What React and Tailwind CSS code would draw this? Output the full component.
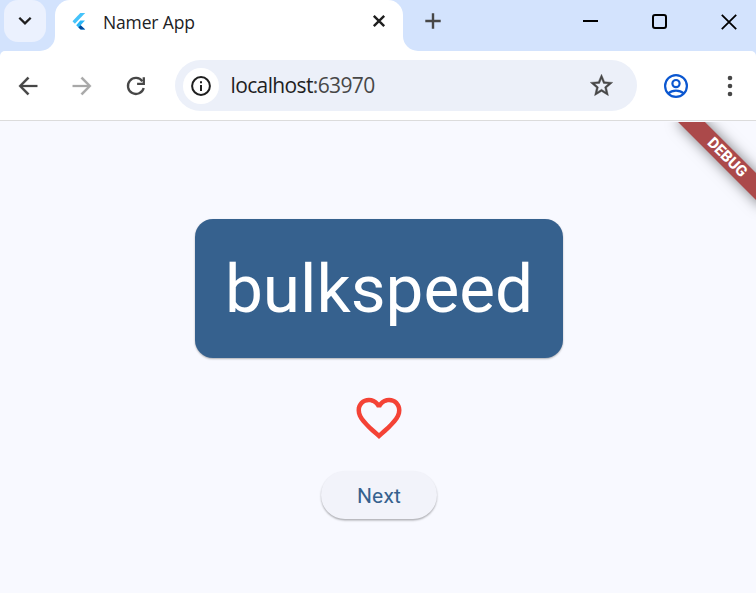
import React from "react";

const Material = ({ size, d, className, weight = 0 }) => (
  <svg width={size} height={size} viewBox="0 0 24 24" className={className} fill="currentColor" stroke="currentColor" strokeWidth={weight}>
    <path d={d} />
  </svg>
);

function FlutterLogo() {
  return (
    <svg width="16" height="19" viewBox="0 0 16 19">
      <path d="M0.5 9.3 8.3 1H13.2L2.9 11.7Z" fill="#45c3fa" />
      <path d="M8.3 8.6H13L8.6 13.2 13.2 17.6H8.6L4.2 13.2Z" fill="#29b6f6" />
      <path d="M6.4 15.4 8.6 13.2 13.2 17.6H8.6Z" fill="#01469b" />
    </svg>
  );
}

function TabStrip() {
  return (
    <header className="flex h-[51px] bg-white">
      <div className="w-[55px] rounded-br-[15px] bg-[#d3e3fd] pl-1">
        <div className="flex h-[42px] w-[42px] items-center justify-center rounded-[14px] bg-[#ebf1fe] text-[#1f1f1f]">
          <svg width="14" height="10" viewBox="0 0 14 10" fill="none" stroke="currentColor" strokeWidth="2.3">
            <path d="M1.3 1.8 7 7.4l5.7-5.6" />
          </svg>
        </div>
      </div>
      <div className="w-[348px] bg-[#d3e3fd]">
        <div className="flex h-[51px] items-start rounded-t-[15px] bg-white pl-[16.5px]">
          <div className="pt-[11.5px]"><FlutterLogo /></div>
          <span className="ml-[15.5px] w-[269px] pt-[10px] font-['Open_Sans',sans-serif] text-[17.5px] leading-[25px] text-[#202124]">
            <span className="tracking-[-0.15px]">Namer App</span>
          </span>
          <svg className="mt-[14px]" width="14" height="14" viewBox="0 0 14 14" stroke="#1f1f1f" strokeWidth="2.4">
            <path d="M1.8 1.8 12.2 12.2M12.2 1.8 1.8 12.2" />
          </svg>
        </div>
      </div>
      <div className="flex flex-1 items-start rounded-bl-[15px] bg-[#d3e3fd]">
        <svg className="ml-[22px] mt-[13px]" width="16" height="16" viewBox="0 0 16 16" stroke="#474747" strokeWidth="2.4">
          <path d="M8 .3v15.4M.3 8h15.4" />
        </svg>
        <svg className="ml-[142px] mt-[20px]" width="15" height="2" viewBox="0 0 15 2">
          <path d="M0 0h15v2H0z" />
        </svg>
        <div className="ml-[54px] mt-[14px] h-[15px] w-[15px] rounded-[3px] border-2 border-black" />
        <svg className="ml-[53.5px] mt-[14px]" width="16" height="16" viewBox="0 0 16 16" stroke="#000" strokeWidth="1.8">
          <path d="M.8.8 15.2 15.2M15.2.8.8 15.2" />
        </svg>
      </div>
    </header>
  );
}

function Toolbar() {
  return (
    <div className="bg-[#d3e3fd]">
      <div className="flex h-[70px] items-center rounded-t-[5px] border-b border-[#dcdcdc] bg-white pl-[14px]">
        <Material size={28} className="text-[#474747]" weight={0.2} d="M20 11.1H7.45l5.6-5.6L11.7 4.1 4 12l7.7 7.9 1.35-1.4-5.6-5.6H20z" />
        <Material size={28} className="ml-[26px] text-[#a9a9a9]" weight={0.2} d="M4 11.1h12.55l-5.6-5.6 1.35-1.4L20 12l-7.7 7.9-1.35-1.4 5.6-5.6H4z" />
        <svg className="ml-[26px]" width="28" height="28" viewBox="0 0 28 28" fill="none" stroke="#474747" strokeWidth="2.3">
          <path d="M20.4 9.2A8 8 0 1 0 21.7 16" />
          <path d="M21.8 5.2v6.6h-6.7" />
        </svg>
        <div className="ml-[25px] flex h-[51px] w-[462px] items-center rounded-full bg-[#ecf0f9] pl-2">
          <div className="flex h-9 w-9 items-center justify-center rounded-full bg-white">
            <svg width="20" height="20" viewBox="0 0 20 20" fill="none" stroke="#1f1f1f" strokeWidth="2">
              <circle cx="10" cy="10" r="8.9" />
              <path d="M10 9v6M10 5.2v2.1" />
            </svg>
          </div>
          <span className="ml-[11.5px] w-[357px] pb-[1px] font-['Open_Sans',sans-serif] text-[21px] leading-[28px] text-[#1f1f1f]">
            <span className="tracking-[-0.63px]">localhost<span className="text-[#474747]">:63970</span></span>
          </span>
          <Material
            size={27}
            weight={0.35}
            className="text-[#474747]"
            d="M22 9.24l-7.19-.62L12 2 9.19 8.63 2 9.24l5.46 4.73L5.82 21 12 17.27 18.18 21l-1.63-7.03L22 9.24zM12 15.4l-3.76 2.27 1-4.28-3.32-2.88 4.38-.38L12 6.1l1.71 4.04 4.38.38-3.32 2.88 1 4.28L12 15.4z"
          />
        </div>
        <svg className="ml-[27px]" width="24" height="24" viewBox="0 0 24 24" fill="none" stroke="#0b57d0" strokeWidth="2.2">
          <circle cx="12" cy="12" r="10.9" />
          <circle cx="12" cy="9.6" r="3.6" />
          <path d="M4.3 19.4C8.3 15.6 15.7 15.6 19.7 19.4" />
        </svg>
        <svg className="ml-[39px]" width="6" height="22" viewBox="0 0 6 22" fill="#474747">
          <circle cx="3" cy="3" r="2.3" />
          <circle cx="3" cy="11" r="2.3" />
          <circle cx="3" cy="19" r="2.3" />
        </svg>
      </div>
    </div>
  );
}

export default function App() {
  return (
    <div className="flex h-[593px] w-[756px] flex-col overflow-hidden bg-white">
      <TabStrip />
      <Toolbar />
      <main className="relative flex flex-1 flex-col items-center overflow-hidden bg-[#f8f9ff] pl-[2px] font-[Roboto,sans-serif]">
        <div className="mt-[98.4px] flex h-[138.4px] w-[368px] items-center justify-center rounded-[18px] bg-[#36618e] shadow-[0_1px_2px_rgba(0,0,0,0.3)]">
          <span className="text-[67.5px] leading-[78px] text-white">bulkspeed</span>
        </div>
        <Material
          size={54}
          className="mt-[33.2px] text-[#f44336]"
          d="M16.5 3c-1.74 0-3.41.81-4.5 2.09C10.91 3.81 9.24 3 7.5 3 4.42 3 2 5.42 2 8.5c0 3.78 3.4 6.86 8.55 11.54L12 21.35l1.45-1.32C18.6 15.36 22 12.28 22 8.5 22 5.42 19.58 3 16.5 3zm-4.4 15.55l-.1.1-.1-.1C7.14 14.24 4 11.39 4 8.5 4 6.5 5.5 5 7.5 5c1.54 0 3.04.99 3.57 2.36h1.87C13.46 5.99 14.96 5 16.5 5c2 0 3.5 1.5 3.5 3.5 0 2.89-3.14 5.74-7.9 10.05z"
        />
        <button className="mt-[26.2px] flex h-[48px] w-[116px] items-center justify-center rounded-full bg-[#f2f3fa] pt-[1.5px] text-[21px] font-normal leading-[30px] tracking-[0.15px] text-[#36618e] shadow-[0_1.5px_2px_rgba(0,0,0,0.3)]">
          Next
        </button>
        <div className="absolute inset-x-0 bottom-0 top-px overflow-hidden">
          <div className="absolute left-[667px] top-[26px] flex h-[19px] w-[120px] rotate-45 items-center justify-center bg-[#ab494a] shadow-[0_0_14px_rgba(0,0,0,0.5)]">
            <span className="text-[15.3px] font-extrabold leading-[19px] text-white">DEBUG</span>
          </div>
        </div>
      </main>
    </div>
  );
}
